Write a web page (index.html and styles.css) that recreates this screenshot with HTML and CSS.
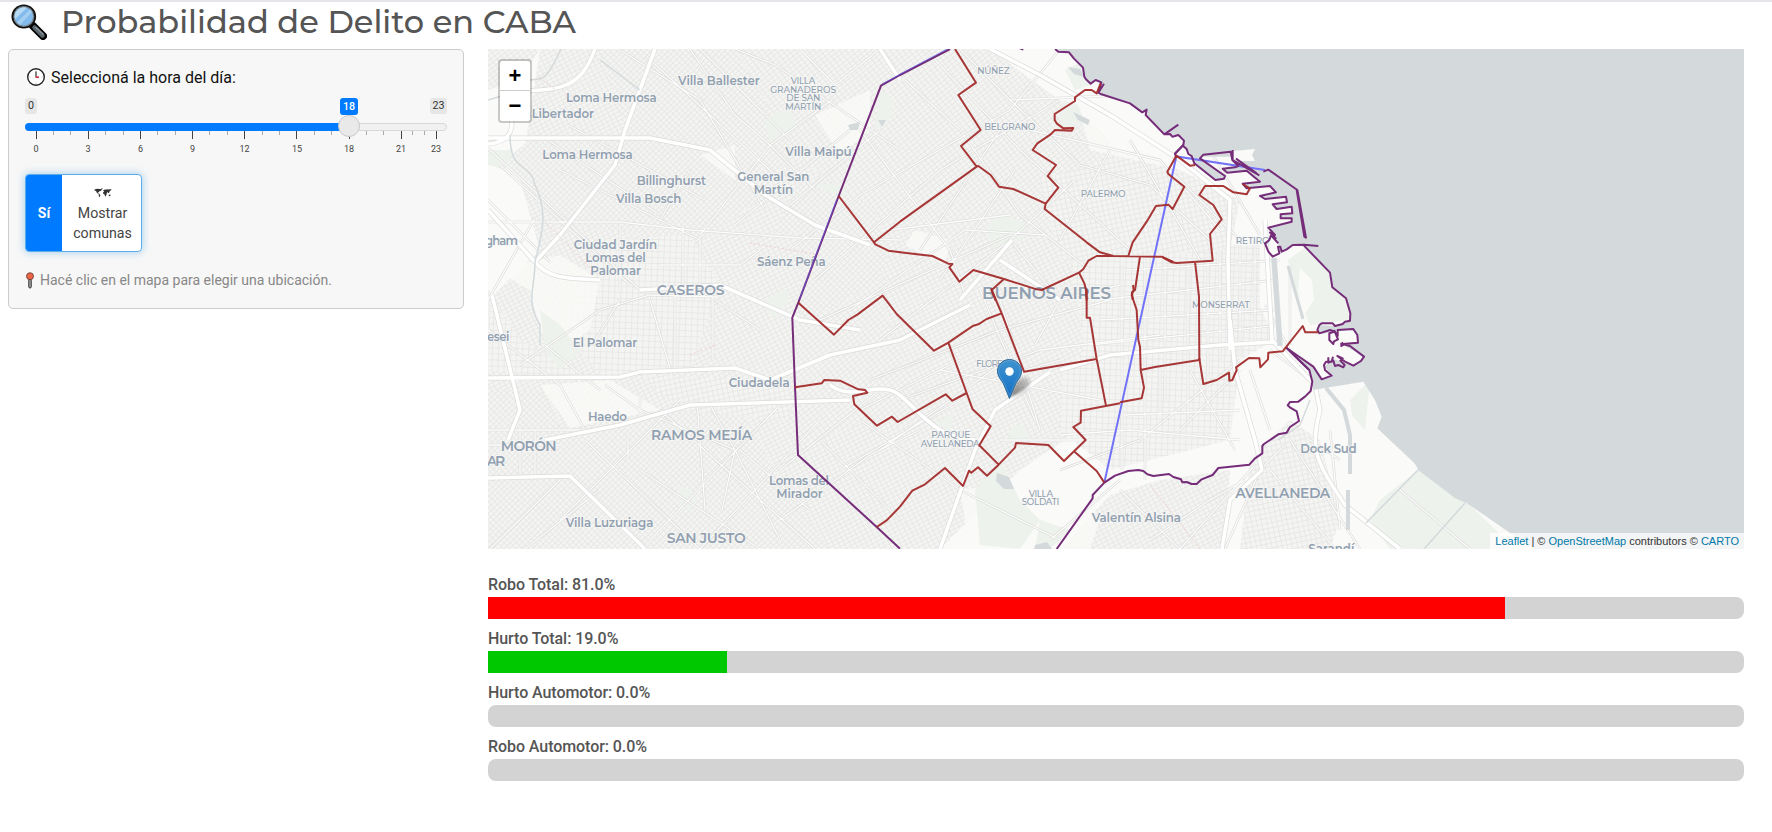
FILE: index.html
```html
<!DOCTYPE html>
<html lang="es">
<head>
<meta charset="utf-8">
<title>Probabilidad de Delito en CABA</title>
<link rel="stylesheet" href="styles.css">
</head>
<body>
<header class="page-header">
  <svg class="glass" viewBox="0 0 36 36" width="36" height="36">
    <path d="M22 22 L32 32" stroke="#000" stroke-width="8" stroke-linecap="round"/>
    <path d="M23.5 23.5 L31.5 31.5" stroke="#5d686d" stroke-width="4.5" stroke-linecap="round"/>
    <path d="M25 23.5 L32 30" stroke="#8b979b" stroke-width="1.3" stroke-linecap="round"/>
    <ellipse cx="12.8" cy="12.5" rx="12.3" ry="12" fill="#111"/>
    <circle cx="12.8" cy="12.5" r="10.5" fill="#788287"/>
    <circle cx="12.8" cy="12.5" r="9.3" fill="#83bcec"/>
    <path d="M4 15 A9.3 9.3 0 0 1 16 3.8 Z" fill="#b7dbf5"/>
    <path d="M6 18.5 L19 5.5 L21 8 L9 21 Z" fill="#a4cff1"/>
  </svg>
  <h2 class="title">Probabilidad de Delito en CABA</h2>
</header>
<div class="layout">
  <aside class="sidebar">
    <label class="field-label">
      <svg class="clock" viewBox="0 0 20 20" width="20" height="20">
        <circle cx="10" cy="10" r="8.3" fill="#fff" stroke="#222" stroke-width="1.4"/>
        <g fill="#999"><circle cx="10" cy="4" r=".5"/><circle cx="16" cy="10" r=".5"/><circle cx="10" cy="16" r=".5"/><circle cx="4" cy="10" r=".5"/></g>
        <path d="M10 4.5 V10" stroke="#333" stroke-width="1.2"/><path d="M9.5 10.2 H13" stroke="#d5304a" stroke-width="1.7"/>
      </svg>
      <span>Seleccioná la hora del día:</span>
    </label>
    <svg class="slider" viewBox="0 0 422 60" width="422" height="60">
      <rect class="badge" x="0" y="0" width="12" height="16" rx="3"/>
      <rect class="badge" x="405" y="0" width="17" height="16" rx="3"/>
      <text class="badge-text" x="6" y="11">0</text>
      <text class="badge-text" x="413.5" y="11">23</text>
      <rect class="track" x=".5" y="25.500" width="421" height="7" rx="3.500"/>
      <path class="track-on" d="M4 25 H320 V33 H4 A4 4 0 0 1 4 25 Z"/>
      <path class="tick" d="M11.5 33V41 M63.5 33V41 M115.500 33V41 M167.500 33V41 M219.500 33V41 M271.500 33V41 M324.500 33V41 M376.500 33V41 M411.500 33V41"/>
      <path class="tick small" d="M28.500 33V37 M45.500 33V37 M80.500 33V37 M98.500 33V37 M132.500 33V37 M150.500 33V37 M184.500 33V37 M202.500 33V37 M237.500 33V37 M254.500 33V37 M289.500 33V37 M306.500 33V37 M341.500 33V37 M358.500 33V37 M387.500 33V37 M399.500 33V37"/>
      <circle class="handle" cx="324" cy="28" r="10.500"/>
      <rect class="badge-on" x="315" y="0" width="18" height="17" rx="3"/>
      <text class="badge-text on" x="324" y="11.500">18</text>
      <g class="tick-text">
        <text x="11" y="53.500">0</text><text x="63" y="53.500">3</text><text x="115.500" y="53.500">6</text><text x="167.500" y="53.500">9</text><text x="219.500" y="53.500">12</text><text x="272" y="53.500">15</text><text x="324" y="53.500">18</text><text x="376" y="53.500">21</text><text x="411" y="53.500">23</text>
      </g>
    </svg>
    <div class="switch">
      <div class="switch-on">Sí</div>
      <div class="switch-label">
        <svg class="worldmap" viewBox="0 0 18 10" width="18" height="10"><path d="M.5 1.500 3 .8 8 1.200 6.800 3 5.500 3 5 4.500 4 4 3.800 5 5.500 6 6.300 7 5.600 9.500 4.800 8 4.700 6.300 2.800 4.800 2 3 .5 2.500Z M7.200 .4 9 .6 7.500 2Z M9 2.500 11 1.500 17.500 1.300 17 2.500 15.800 2.800 15.500 4.300 14.300 5.300 13.500 4 12.800 5 12.500 6.800 11.300 8.800 10.500 6.500 9 5.500 9.300 4 10.300 3.600Z M14.700 6.800 16.300 6.600 16.500 8.200 14.800 8Z" fill="#333"/></svg>
        <span>Mostrar</span>
        <span>comunas</span>
      </div>
    </div>
    <p class="hint">
      <svg viewBox="0 0 8 17" width="8" height="17"><rect x="2.700" y="7" width="2.600" height="9" rx="1.200" fill="#999" stroke="#333" stroke-width=".9"/><circle cx="4" cy="4.200" r="3.500" fill="#ec6547" stroke="#5d3a34" stroke-width=".8"/></svg>
      <span>Hacé clic en el mapa para elegir una ubicación.</span>
    </p>
  </aside>
  <main class="content">
    <div class="map">
      <svg class="map-canvas" viewBox="488 49 1256 500" width="1256" height="500">
        <defs>
          <pattern id="g0" width="6" height="6" patternUnits="userSpaceOnUse" patternTransform="rotate(2)"><rect class="block" width="6" height="6"/><path class="street" d="M0 .5H6M.5 0V6"/></pattern>
          <pattern id="g1" width="5" height="4" patternUnits="userSpaceOnUse" patternTransform="rotate(-38)"><rect class="block" width="5" height="4"/><path class="street" d="M0 .5H5M.5 0V4"/></pattern>
          <pattern id="g2" width="4" height="4.500" patternUnits="userSpaceOnUse" patternTransform="rotate(45)"><rect class="block" width="4" height="4.500"/><path class="street" d="M0 .5H5M.5 0V5"/></pattern>
          <pattern id="g3" width="5" height="4" patternUnits="userSpaceOnUse" patternTransform="rotate(-27)"><rect class="block" width="5" height="4"/><path class="street" d="M0 .5H5M.5 0V4"/></pattern>
          <pattern id="g4" width="5" height="5" patternUnits="userSpaceOnUse" patternTransform="rotate(-12)"><rect class="block" width="5" height="5"/><path class="street" d="M0 .5H5M.5 0V5"/></pattern>
          <linearGradient id="pin" x1="0" y1="0" x2="0" y2="1"><stop offset="0" stop-color="#3f93cf"/><stop offset="1" stop-color="#126fc6"/></linearGradient>
          <linearGradient id="shade" x1="0" y1="1" x2="1" y2="0"><stop offset="0" stop-color="#222" stop-opacity=".6"/><stop offset="1" stop-color="#222" stop-opacity=".15"/></linearGradient>
          <filter id="soft" x="-30%" y="-30%" width="160%" height="160%"><feGaussianBlur stdDeviation="1.6"/></filter>
          <g id="minor">
            <path d="M488 148 L640 290 M500 165 L630 285 M545 138 L660 215 M568 125 L705 200 M620 50 L700 100 765 210 M645 55 L775 175 M690 49 L735 115 770 145 815 190 M735 49 L775 65 900 150 M800 49 L835 85 880 49 M700 235 L770 145 832 100 M735 225 L850 130 M790 205 L880 130 M560 170 L700 240 M488 200 L550 262 M535 218 L488 300 M690 170 L660 220 M700 49 L790 140"/>
            <path d="M488 222 L620 222 690 230 800 238 900 240 M620 225 V290 M683 225 V300 M660 265 H740 L760 250 M700 240 L700 290 M520 365 L600 310 650 295 715 297 M545 345 L600 390 M650 300 L672 375 M675 295 V370 M713 297 V360 M715 300 L760 330 M488 330 L560 385 585 430 M640 395 V420 M620 300 L595 340 M488 290 V345"/>
            <path d="M605 385 L640 410 735 450 780 540 M628 435 V460 M697 400 L705 510 M710 405 L735 450 722 510 M740 450 L810 510 M680 400 L560 520 M780 405 L650 540 M820 420 L700 549 M488 430 H585 M488 445 H560 M520 430 V478 M535 430 V478 M550 430 V455 M560 480 L490 549 M600 490 L525 549 M640 470 L760 549 M585 440 L700 549 M660 410 L815 549 M780 520 L870 455 920 430"/>
            <path d="M790 250 L860 195 1010 110 1060 49 M815 280 L940 170 1060 100 M850 310 L965 230 1045 235 M880 340 L1010 240 1075 180 M960 49 L1010 100 1080 165 1150 185 1210 240 M925 49 L1020 150 1130 250 M905 80 L960 130 1020 215 M860 130 L950 250 965 295 M1010 100 L1130 95 M1000 130 L920 250 M1020 215 L1090 270 M1030 130 L1160 160 1220 230 M1110 150 L1060 240 M1130 140 L1200 260 M1010 215 L890 230"/>
            <path d="M820 320 L1010 235 M870 380 L1000 330 1110 300 M900 400 L1040 350 1160 335 M860 410 L960 360 M1015 170 L940 280 M1035 345 L1060 300 1010 240 M1000 300 L1040 430 M980 290 L1035 420 M880 450 L1000 365 M840 470 L960 400 M940 370 L1100 400 M1000 440 L1110 440 M990 380 L1060 360 M820 440 L900 520 M860 420 L960 490 1060 540 M780 470 L880 390"/>
            <path d="M1145 250 V480 M1165 250 V400 M1188 265 V420 M1208 250 V380 M1122 265 V470 M1100 300 L1275 280 M1100 320 L1275 310 M1090 345 L1280 325 M1130 270 L1280 260 M1060 300 L1120 285 M1060 435 L1130 430 1240 440 M1060 470 L1140 440 1190 400 1240 360 M1180 430 L1240 370 M1125 415 L1240 410 M1190 370 L1235 450 M1160 415 V365 M1250 370 L1270 430"/>
            <path d="M1220 250 V360 M1240 245 V355 M1255 240 V345 M1265 305 L1290 350 M1210 150 L1260 235 M1170 170 L1240 240 M1290 265 V345 M1270 350 L1310 380 M1225 549 L1260 470 1285 445 M1180 549 L1255 465 M1270 470 L1335 549 M1290 440 L1360 549 M1150 540 L1210 500 1245 480 M1330 430 L1340 530 M1310 440 L1340 460 M1050 540 L1120 480 M1120 490 L1180 549 M1400 490 L1470 549"/>
          </g>
          <g id="major">
            <path d="M488 138 H650 L710 150 765 195 815 225 870 245 M655 49 L625 130 615 165 560 235 535 262 488 210 M595 49 C580 90 560 92 500 90 M488 144 C510 142 514 130 511 115 M535 262 C550 280 570 278 600 280 M488 378 L620 377 640 372 735 368 770 380 830 355 900 340 970 305 M492 295 L520 410 508 440 M488 478 L570 476 645 549 M545 440 L620 425 690 405 850 400 M640 290 L720 285 800 320 860 330"/>
            <path d="M880 49 L900 80 M990 49 L1040 75 1110 115 1180 160 1230 200 1228 260 1230 350 M1230 320 L1235 370 1255 440 1262 470 M1060 370 L1110 355 1220 345 1275 342 M940 549 L975 450 995 410 1050 372 M1060 300 L1000 260 M1012 240 L960 300 M830 385 C850 400 870 385 890 390 S930 440 975 440 M1265 220 L1272 340 1315 385 1320 410 C1310 450 1315 460 1345 505 L1400 549 M1262 470 L1230 500 1222 549"/>
          </g>
        </defs>
        <rect class="land" x="488" y="49" width="1256" height="500"/>
        <!-- built-up districts -->
        <path fill="url(#g3)" d="M540 49 H980 L1090 140 1050 250 1080 430 1020 470 940 549 H520 L488 480 V300 L540 250 520 180Z"/>
        <path fill="url(#g2)" d="M600 49 H735 L800 140 760 200 700 240 560 225 625 130Z M530 140 H625 L560 230 505 160Z M488 390 H540 L560 425 640 410 740 405 780 480 830 549 H488Z M800 180 L860 170 890 250 860 330 790 320 760 260Z"/>
        <path fill="url(#g1)" d="M735 49 H990 L1100 130 1160 200 1120 255 1000 265 890 220 800 160Z M488 49 H540 L520 80 488 90Z M790 330 L900 270 960 320 920 420 840 450 790 440Z"/>
        <path fill="url(#g0)" d="M600 240 L690 235 720 285 690 370 600 375 560 330Z M1070 255 L1235 250 1275 340 1240 360 1230 440 1110 470 1060 430Z M488 290 L520 340 590 380 488 370Z M1210 245 H1260 V345 H1210Z"/>
        <path fill="url(#g3)" d="M900 240 L1040 230 1070 260 1085 350 1000 440 920 400 880 300Z M740 240 L800 230 800 360 740 370Z M790 450 L870 420 960 440 930 549 830 530Z M1160 480 L1230 470 1225 549 1060 549 1110 495Z"/>
        <path fill="url(#g4)" d="M1040 180 L1140 150 1240 200 1230 250 1060 260Z M1250 460 L1290 420 1320 440 1340 520 1330 549 1240 549Z M640 375 L790 380 790 420 680 410Z"/>
        <path class="open" d="M495 270 L560 255 600 280 590 330 555 355 540 330 530 290Z M540 385 L610 380 660 410 570 428Z M700 155 L735 145 735 180Z M815 115 L870 90 870 130 840 155Z M915 230 L950 240 945 265 905 245Z M1070 80 L1160 130 1180 170 1090 150Z M960 490 L1030 480 1100 520 1090 549 970 549Z"/>
        <path class="park" d="M488 150 L513 150 505 170 488 165Z M540 310 L560 325 580 350 560 370 545 350Z M986 225 L1000 213 1028 225 1020 242 992 248Z M1063 100 L1078 105 1085 122 1060 130Z M765 120 L790 105 795 125 770 145Z M880 90 L895 100 890 120 875 130Z M815 183 L840 185 850 195 830 193Z M1010 430 C1015 420 1030 425 1028 438 C1015 445 1005 440 1010 430Z M975 490 L1000 460 1020 500 1040 520 1020 549 980 545Z M1040 520 L1070 530 1050 549H1035Z M760 303 L785 290 790 300 775 318Z M935 425 L955 410 950 430Z M678 485 L700 495 690 510 680 505Z M1065 70 L1085 60 1090 85 1075 90Z"/>
        <path class="park" d="M1288 260 L1305 248 1330 272 1335 290 1346 300 1350 320 1310 325 1295 285Z M1350 400 L1370 380 1365 430 1352 415Z M1380 500 L1418 470 1470 505 1515 549 H1390 L1370 520Z"/>
        <path class="land" d="M1300 268 L1312 280 1314 300 1304 315 1298 290Z"/>
        <use href="#minor" class="casing-minor"/><use href="#minor" class="road-minor"/>
        <use href="#major" class="casing-major"/><use href="#major" class="road-major"/>
        <path class="stream" d="M510 135 C510 175 530 160 535 185 C550 215 540 240 535 262 M535 262 C535 290 525 300 540 325 L540 345 M561 49 C545 85 540 78 530 80 M600 60 L640 90 M488 100 L505 95"/>
        <path class="rail" d="M545 222 L590 268 M750 243 L820 255 M690 355 L715 345 M1150 485 L1200 549 M540 78 L556 90"/>
        <path class="water" d="M848 125 L860 122 858 130 850 130Z M878 120 l8 0 -4 7Z M1073 112 L1090 120 1088 125 1078 120Z M997 473 l12 4 5 12 -10 0 -8 -8Z M1035 545 l12 -3 5 7 h-18Z M1068 67 l12 2 4 8 -10 -3Z"/>
        <!-- river -->
        <g class="water" transform="translate(900 40) scale(.33333)"><path d="M465 27 L475 35 507 37 522 56 549 83 553 110 572 131 587 120 604 127 597 158 690 190 733 215 793 283 835 285 852 302 900 350 2532 350 V27Z"/></g>
        <g class="water" transform="translate(1150 80) scale(.33333)">
          <path d="M0 100 L43 163 84 164 103 185 97 196 133 250 196 300 222 295 225 288 150 232 160 224 242 214 265 258 218 266 232 278 290 272 330 305 278 313 290 325 360 318 378 335 330 348 345 357 405 350 411 367 368 373 380 387 425 380 427 400 392 403 392 415 425 415 425 425 355 443 385 490 388 520 428 495 462 494 540 578 547 622 588 655 601 700 600 722 555 738 508 735 502 750 515 762 560 752 610 747 622 765 624 788 575 792 642 830 610 857 545 835 525 860 545 887 515 898 490 860 410 805 475 868 490 930 520 925 640 905 675 960 695 1010 682 1045 815 1170 H1782 V100Z"/>
        </g>
        <path class="water" d="M1405 430 L1418 470 1455 498 1467 503 1510 533 1535 549 H1744 V410 H1400Z M1400 420 L1420 470 1430 420Z M1400 440 L1418.300 469.300 1455 498.300 1467 503.300 1510 532.700 1535 549 H1744 V430Z"/>
        <path class="land" d="M1233 151 l22 -2 -3 6 3 6 -22 0Z"/>
        <path class="canal" d="M1326 388 L1344 410 1350 435 V474 M1348 490 V530"/><path class="dock" d="M1274 258 L1280 346"/><path class="dock thin" d="M1288 266 L1303 319"/>
        <path class="stream" d="M1366 523 L1418 470 M1424 549 L1465 503 M1310 400 L1300 425 1278 440"/>
        <!-- place names -->
        <g class="names" transform="translate(480 40) scale(.33333)">
          <text x="594" y="135" textLength="245">Villa Ballester</text><text x="258" y="187" textLength="272">Loma Hermosa</text><text x="155" y="234" textLength="187">Libertador</text><text x="187" y="357" textLength="271">Loma Hermosa</text>
          <text x="470" y="435" textLength="208">Billinghurst</text><text x="408" y="490" textLength="196">Villa Bosch</text><text x="772" y="423" textLength="216">General San</text><text x="821" y="461" textLength="118">Martín</text><text x="916" y="348" textLength="199">Villa Maipú</text>
          <text x="281" y="628" textLength="250">Ciudad Jardín</text><text x="316" y="667" textLength="181">Lomas del</text><text x="331" y="705" textLength="152">Palomar</text><text x="831" y="679" textLength="206">Sáenz Peña</text><text x="15" y="614" textLength="99">gham</text>
          <text class="city" x="530" y="765" textLength="204">CASEROS</text>
          <text class="small" x="932" y="131" textLength="74">VILLA</text><text class="small" x="871" y="158" textLength="197">GRANADEROS</text><text class="small" x="919" y="184" textLength="102">DE SAN</text><text class="small" x="916" y="211" textLength="108">MARTÍN</text>
        </g>
        <g class="names" transform="translate(480 290) scale(.33333)">
          <text x="21" y="153" textLength="67">esei</text><text x="278" y="172" textLength="194">El Palomar</text><text x="746" y="291" textLength="183">Ciudadela</text><text x="324" y="392" textLength="117">Haedo</text><text x="867" y="585" textLength="180">Lomas del</text><text x="889" y="623" textLength="139">Mirador</text><text x="257" y="710" textLength="263">Villa Luzuriaga</text>
          <text class="city" x="62" y="484" textLength="168">MORÓN</text><text class="city" x="20" y="527" textLength="56">AR</text><text class="city" x="513" y="451" textLength="304">RAMOS MEJÍA</text><text class="city" x="560" y="759" textLength="237">SAN JUSTO</text>
        </g>
        <g class="names" transform="translate(900 40) scale(.33333)">
          <text class="small" x="232" y="103" textLength="97">NÚÑEZ</text><text class="small" x="253" y="270" textLength="153">BELGRANO</text><text class="small" x="542" y="472" textLength="135">PALERMO</text><text class="capital" x="246" y="778" textLength="387">BUENOS AIRES</text>
        </g>
        <g class="names" transform="translate(1060 290) scale(.33333)">
          <text class="small" x="527" y="-139" textLength="102">RETIRO</text><text class="small" x="396" y="53" textLength="173">MONSERRAT</text><text x="721" y="488" textLength="169">Dock Sud</text><text class="city" x="526" y="623" textLength="285">AVELLANEDA</text><text x="95" y="697" textLength="268">Valentín Alsina</text><text x="745" y="790" textLength="138">Sarandí</text>
          <text class="small" x="-251" y="230" textLength="93">FLORES</text><text class="small" x="-386" y="445" textLength="117">PARQUE</text><text class="small" x="-418" y="471" textLength="177">AVELLANEDA</text><text class="small" x="-94" y="620" textLength="73">VILLA</text><text class="small" x="-115" y="646" textLength="113">SOLDATI</text>
        </g>
        <!-- city limit -->
        <path class="link" d="M1104.300 482.700 L1176.300 156.500 1265 170"/>
        <g class="limit">
          <path transform="translate(900 40) scale(.33333)" d="M360 25 L370 29 M465 27 L475 35 507 37 522 56 549 83 553 110 558 118 572 131 587 120 604 127 595 158 612 131 M595 158 L602 162 690 190 727 217 740 209 737 225 793 283 835 254 M793 283 L810 282 817 290 835 285 852 302 850 315 826 341"/>
          <path transform="translate(1150 80) scale(.33333)" d="M100 195 L75 220 77 230 M97 196 L110 207 115 222 125 228 133 250 196 300 222 296 225 288 150 235 160 224 242 215 247 240 265 258 255 262 218 266 232 278 290 272 330 305 278 311 290 325 360 318 378 337 330 348 345 357 408 350 411 367 368 373 380 387 425 380 427 400 392 403 392 415 425 415 425 425 355 443 375 465 360 458 377 475 365 468 385 490 M248 210 V240 L328 286 M258 236 L320 280 M340 275 L355 269 442 330 468 473 463 470 440 330 M365 460 L358 480 345 490 355 515 368 530 388 520 384 500 391 500 395 515 410 508 428 495 462 494 505 498 M462 497 L540 578 547 622 588 655 601 700 600 722 585 725 578 732 555 738 548 730 515 730 508 735 502 750 508 760 540 750 555 755 538 760 538 780 550 792 552 784 564 778 553 752 563 768 563 750 610 747 622 765 624 788 578 792 M575 787 L581 794 574 798 574 788 M578 792 L600 798 642 830 633 843 610 857 585 845 562 828 578 835 571 842 584 855 580 862 565 855 555 858 550 842 535 848 535 832 M549 830 L545 845 528 845 522 855 525 870 545 887 515 898 490 860 440 825 410 804 475 868"/>
          <path transform="translate(1060 290) scale(.33333)" d="M678 172 L748 240 757 275 752 303 735 320 715 335 690 336 683 346 692 354 710 364 717 393 690 411 680 428 655 433 612 462 607 468 607 490 585 505 568 524 475 534 458 555 425 568 410 582 395 582 380 576 367 577 363 568 340 561 327 552 280 558 262 553 250 543 235 540 205 543 165 557 133 578 98 615 98 625 -10 777"/>
          <path d="M900 548.700 L876.700 527 798 455 795 386.700 792.300 317.700 798.300 302.700 838.700 196 881 85.700 900 75 950 49"/>
        </g>
        <path class="link thin" d="M882 84 L949 48 M836.500 200 L799.500 299"/>
        <!-- comunas -->
        <g class="comuna">
          <path transform="translate(900 40) scale(.33333)" d="M165 27 L228 128 175 165 242 270 183 318 230 380 0 545 -78 607 M230 380 L235 378 272 405 297 440 340 447 437 491 434 507 560 607 600 637 640 648 785 650 820 666 M437 491 L475 443 443 408 468 375 398 330 412 310 452 283 465 270 515 272 520 264 490 265 470 250 464 240 464 222 525 183 525 172 555 150 575 150 590 160 602 130 M685 648 L698 607 740 545 768 498 805 494 818 507 853 440 805 402 802 395 829 347 870 377 885 375 M640 648 H590 L565 662 550 687 537 698 425 750 410 748 312 717 220 690 178 725 148 682 157 672 145 671 97 648 0 637 M312 717 L275 750 287 782 M537 698 L553 730 558 750 560 782 M720 650 L705 750 696 757 698 780"/>
          <path transform="translate(480 40) scale(.33333)" d="M1076 468 L1182 607 1186 613 1225 632 1262 637"/>
          <path transform="translate(1150 80) scale(.33333)" d="M38 532 L65 547 80 549 188 542 180 462 215 418 190 375 148 345 165 318 220 318 250 337 290 343 300 325 278 312 M135 545 L147 650 148 840"/>
          <path transform="translate(780 290) scale(.33333)" d="M55 38 L162 134 205 90 232 74 308 17 350 72 462 182 505 158 580 107 595 103 620 87 665 70 M633 -5 L635 0 665 70 732 245 950 207 M920 -2 V83 L930 83 950 207 978 347 M45 292 L125 280 133 270 180 272 235 298 255 300 262 308 219 318 223 343 291 407 336 380 353 396 497 313 517 332 560 309 M505 158 L560 309 578 358 632 409 598 466 656 524 705 473 708 459 805 465 852 513 917 450 880 411 902 398 903 362 1020 340 M882 484 L950 543 973 578 M656 524 L621 557 594 532 574 548 567 542 549 588 495 534 435 583 397 602 360 650 320 691 290 711"/>
          <path transform="translate(1060 290) scale(.33333)" d="M219 -15 L221 0 215 15 230 60 235 150 240 170 242 240 252 293 245 325 180 337 M242 240 L285 231 418 210 M418 205 L430 282 470 270 507 248 508 272 517 270 530 240 528 232 567 204 598 205 601 232 624 208 625 188 668 184 728 108 736 127 775 127"/>
        </g>
        <g transform="translate(997 359)">
          <path d="M13 38 L17 27 C22 17 33 15 33 23 C33 30 22 35 13 38Z" fill="url(#shade)" filter="url(#soft)"/>
          <path d="M12.500 .500 C5.900 .500 .5 5.700 .5 12 C.5 18 4.500 21 6.500 25 L12.500 39.500 18.500 25 C20.500 21 24.500 18 24.500 12 C24.500 5.700 19.100 .500 12.500 .500Z" fill="url(#pin)" stroke="#2e6c97"/><path d="M12.500 1.600 C6.500 1.600 1.600 6.300 1.600 12 C1.600 17.500 5.500 20.500 7.500 24.700 L12.500 36.700 17.500 24.700 C19.500 20.500 23.400 17.500 23.400 12 C23.400 6.300 18.500 1.600 12.500 1.600Z" fill="none" stroke="#fff" stroke-opacity=".15"/>
          <circle cx="12.500" cy="12.500" r="4.200" fill="#fff"/>
        </g>
      </svg>
      <div class="zoom"><a class="zoom-in">+</a><a class="zoom-out">−</a></div>
      <div class="attribution"><a>Leaflet</a> | © <a>OpenStreetMap</a> contributors © <a>CARTO</a></div>
    </div>
    <section class="results">
      <div class="result"><div class="result-name">Robo Total: 81.0%</div><div class="bar"><div class="bar-fill red" style="width:81%"></div></div></div>
      <div class="result"><div class="result-name">Hurto Total: 19.0%</div><div class="bar"><div class="bar-fill green" style="width:19%"></div></div></div>
      <div class="result"><div class="result-name">Hurto Automotor: 0.0%</div><div class="bar"></div></div>
      <div class="result"><div class="result-name">Robo Automotor: 0.0%</div><div class="bar"></div></div>
    </section>
  </main>
</div>
</body>
</html>
```
FILE: styles.css
```css
* { box-sizing: border-box; }
body { margin: 0; background: #fff; color: #555; font-family: Roboto, "Liberation Sans", sans-serif; height: 832px; overflow: hidden; }
.page-header { height: 49px; border-top: 2px solid #e3e5e9; display: flex; align-items: flex-start; gap: 13px; padding: 2px 0 0 11px; }
.title { margin: 0; padding-left: 1px; font: 500 32px/36px Montserrat, Inter, sans-serif; color: #555; letter-spacing: 0; white-space: nowrap; }
.layout { display: flex; gap: 24px; padding: 0 28px 0 8px; align-items: flex-start; }
.sidebar { width: 456px; height: 260px; flex: none; background: #f7f7f7; border: 1px solid #ccc; border-radius: 5px; padding: 16px; }
.field-label { display: flex; align-items: center; gap: 5px; height: 22px; font-size: 16px; color: #111; white-space: nowrap; }
.clock { margin-left: 1px; }
.slider { display: block; margin-top: 10px; overflow: visible; }
.badge { fill: #e6e6e6; }
.badge-on { fill: #007bff; }
.badge-text { font-size: 10.700px; fill: #333; text-anchor: middle; }
.badge-text.on { fill: #fff; font-weight: 500; }
.track { fill: #f1f1f1; stroke: #d8d8d8; }
.track-on { fill: #007bff; }
.tick { stroke: #444; fill: none; }
.tick.small { stroke: #aaa; }
.handle { fill: #e9e9e9; stroke: #c8c8c8; }
.tick-text { font-size: 9px; fill: #444; text-anchor: middle; }
.switch { display: flex; width: 117px; height: 78px; margin-top: 16px; border: 1px solid #5aaeea; border-radius: 4px; box-shadow: 0 0 8px rgba(102,175,233,.6); background: #fff; overflow: hidden; font-size: 14px; }
.switch-on { width: 36px; background: #007bff; color: #fff; font-weight: 700; display: flex; align-items: center; justify-content: center; padding-bottom: 1px; }
.switch-label { flex: 1; display: flex; flex-direction: column; align-items: center; line-height: 20px; padding: 13px 0 0 2px; font-size: 14.200px; color: #444; }
.worldmap { margin: 0 0 5px; flex: none; }
.hint { display: flex; align-items: center; gap: 6px; margin: 18px 0 0 1px; height: 20px; font-size: 14px; color: #888; white-space: nowrap; }
.content { flex: 1; min-width: 0; }
.map { position: relative; height: 500px; overflow: hidden; }
.map-canvas { display: block; }
.land { fill: #fafaf8; }
.open { fill: #fafaf8; opacity: .8; }
.block { fill: #f4f4f2; }
.street { stroke: #e4e4e3; stroke-width: .7; fill: none; }
.park { fill: #edf2ed; }
.water { fill: #d4dadc; }
.stream { fill: none; stroke: #d4dadc; stroke-width: 1.500; }
.rail { fill: none; stroke: #f0cdd0; stroke-width: 1; stroke-dasharray: 2 2; }
.casing-minor { fill: none; stroke: #dadad9; stroke-width: 2.500; }
.road-minor { fill: none; stroke: #fdfdfd; stroke-width: 1.300; }
.casing-major { fill: none; stroke: #dcdcdb; stroke-width: 5; stroke-linejoin: round; }
.road-major { fill: none; stroke: #fff; stroke-width: 3.600; stroke-linejoin: round; }
.canal { fill: none; stroke: #d4dadc; stroke-width: 4; }
.dock { fill: none; stroke: #d4dadc; stroke-width: 5.500; }
.dock.thin { stroke-width: 3; }
.names { font-family: Montserrat, Inter, sans-serif; font-size: 35.500px; font-weight: 600; fill: #91a0b0; stroke: #f8f8f6; stroke-width: 5; stroke-opacity: .8; paint-order: stroke; }
.names .city { font-size: 42px; }
.names .small { font-size: 27px; font-weight: 500; }
.names .capital { font-size: 50px; font-weight: 600; }
.link { fill: none; stroke: #7272f8; stroke-width: 2; }
.link.thin { stroke-width: .7; stroke: #6060e8; }
.limit { fill: none; stroke: #752c79; stroke-width: 2; stroke-linejoin: round; }
.limit [transform], .comuna [transform] { stroke-width: 6; }
.comuna { fill: none; stroke: #a22c2c; stroke-opacity: .95; stroke-linejoin: round; }
.zoom { position: absolute; left: 10px; top: 10px; width: 34px; height: 64px; border: 2px solid rgba(0,0,0,.2); border-radius: 4px; background: #fff; background-clip: padding-box; color: #000; font: bold 22px/30px "Liberation Sans", sans-serif; text-align: center; }
.zoom a { display: block; height: 30px; }
.zoom-in { border-bottom: 1px solid #ccc; }
.attribution { position: absolute; right: 0; bottom: 0; height: 16px; padding: 0 5px; background: rgba(255,255,255,.7); color: #333; font: 11px/17px "Liberation Sans", Arial, sans-serif; white-space: nowrap; }
.attribution a { color: #0078a8; }
.results { padding-top: 24px; }
.result { height: 54px; }
.result-name { height: 24px; line-height: 24px; font-size: 16px; font-weight: 500; color: #555; letter-spacing: -.07px; white-space: nowrap; }
.bar { height: 22px; background: #d3d3d3; border-radius: 8px; }
.bar-fill { height: 22px; }
.red { background: #f00; }
.green { background: #00c800; }
```
